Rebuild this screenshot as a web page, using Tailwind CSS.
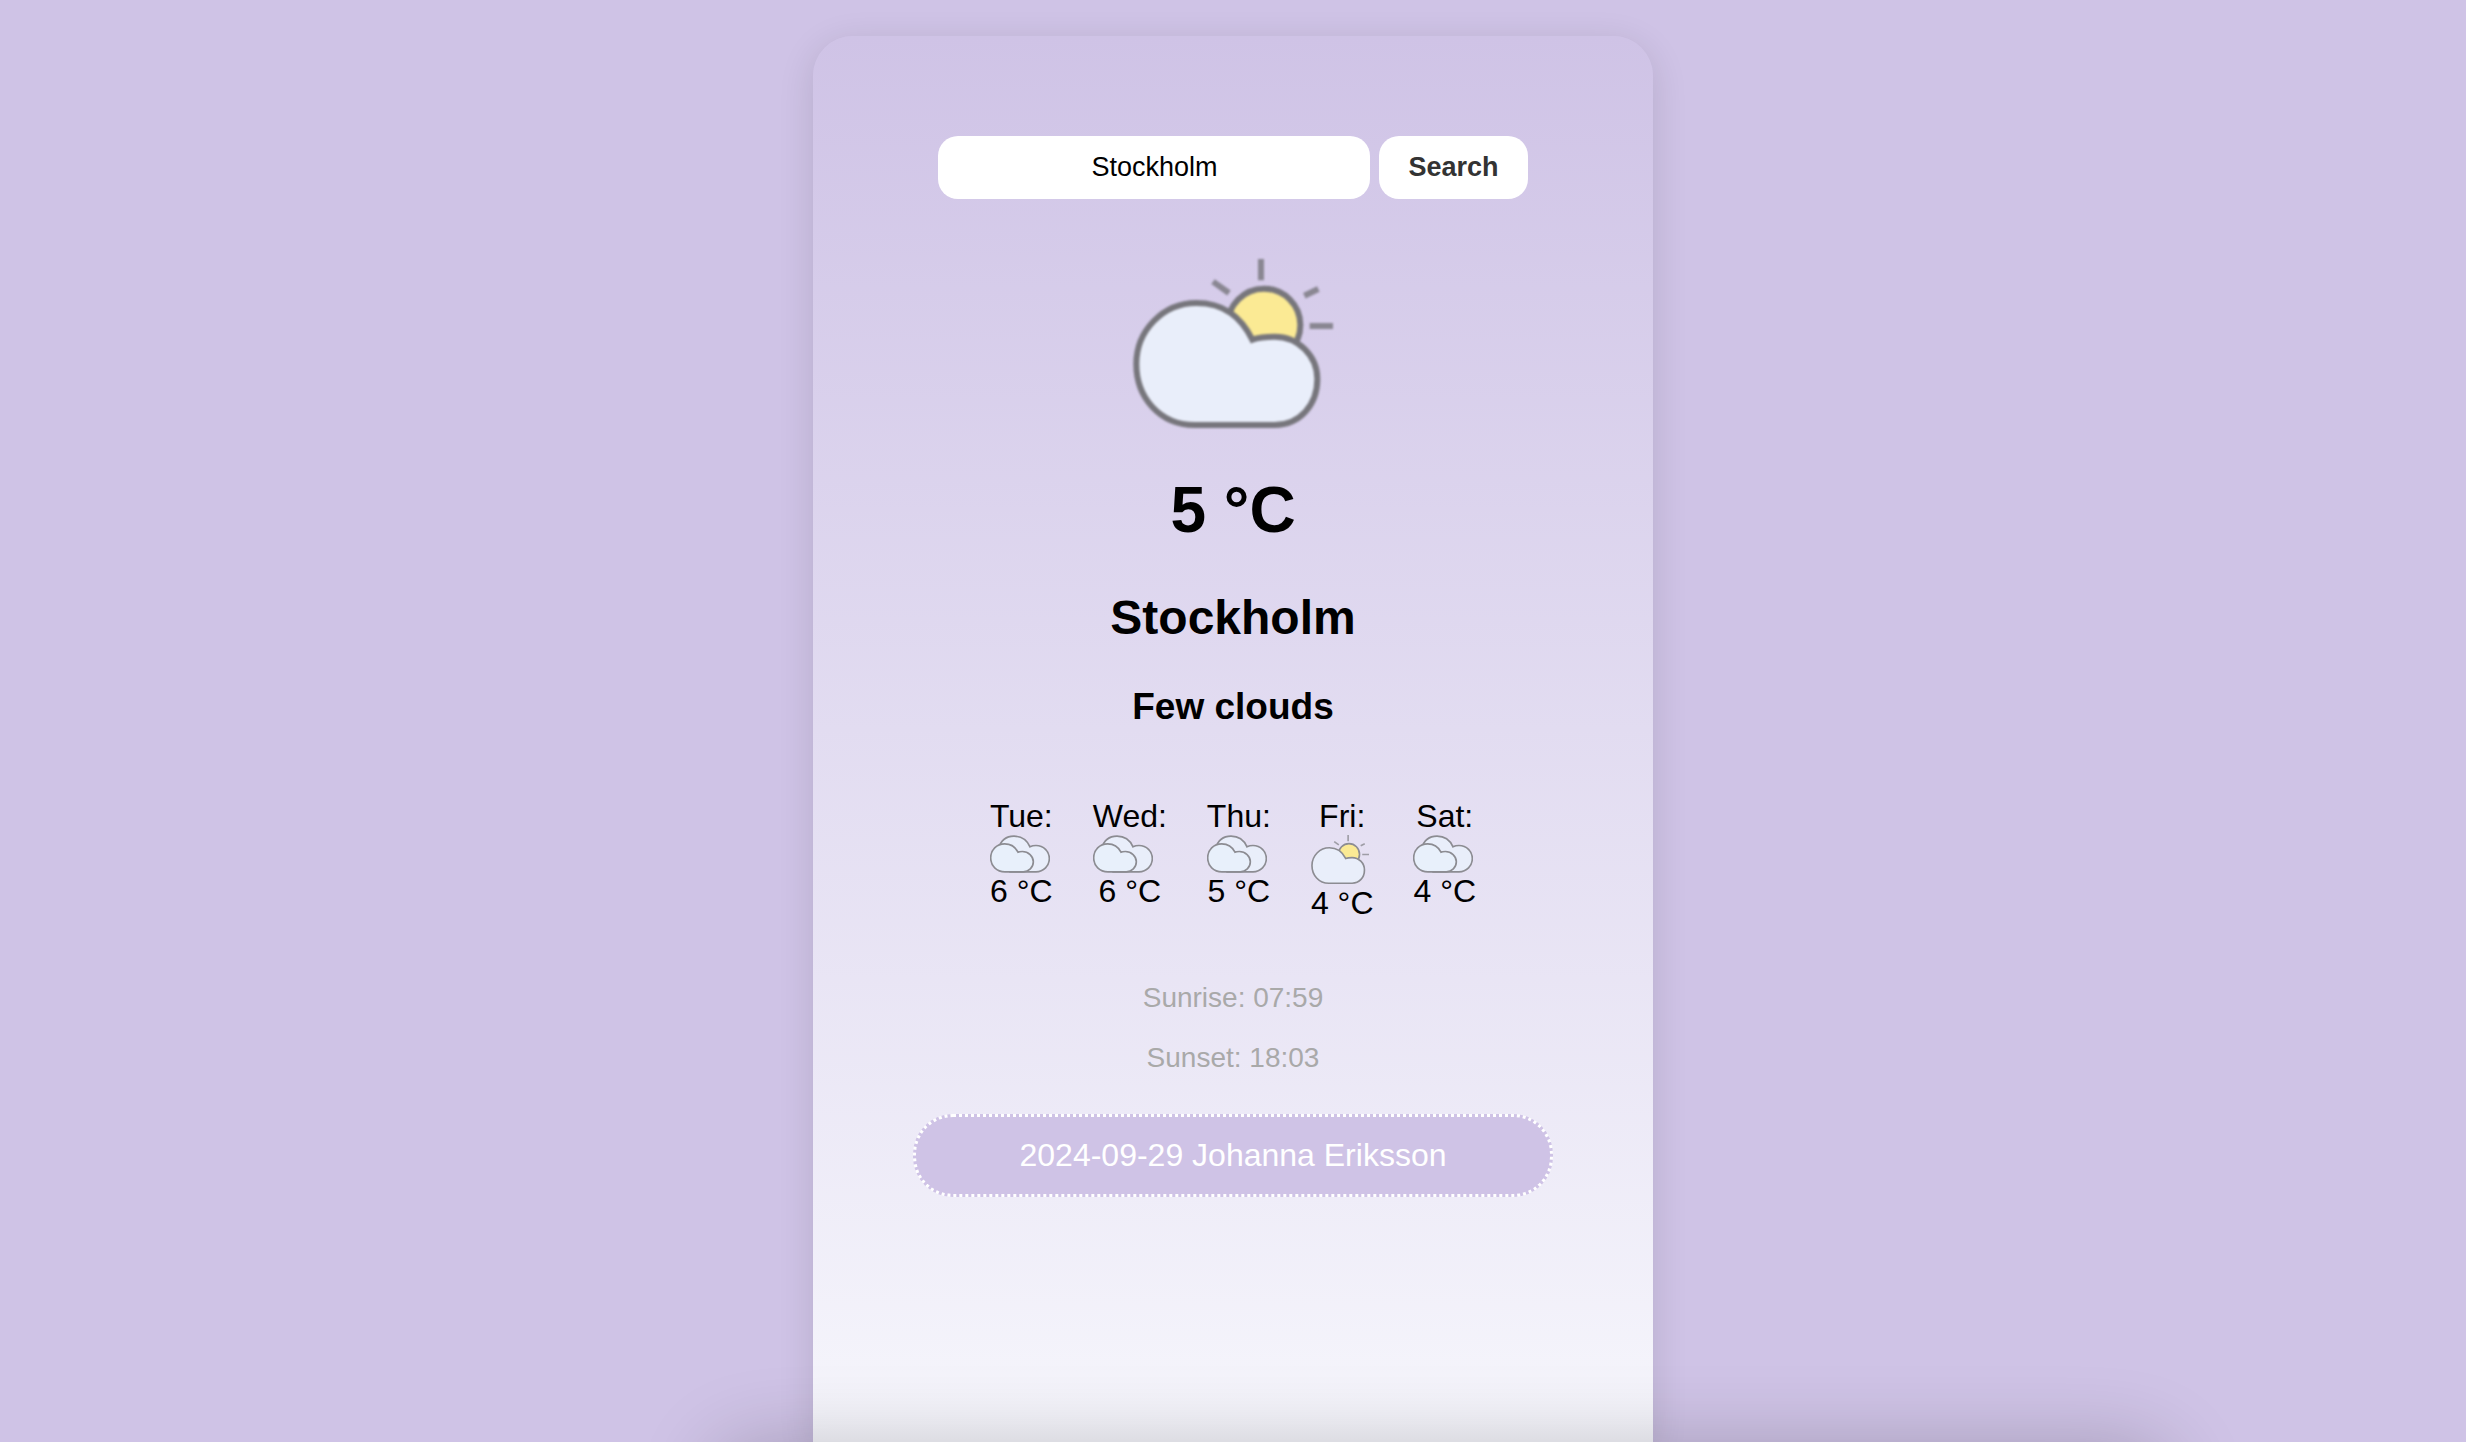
<!DOCTYPE html>
<html lang="en">
<head>
<meta charset="utf-8">
<meta name="viewport" content="width=device-width, initial-scale=1">
<title>Weather</title>
<script src="https://cdn.jsdelivr.net/npm/@tailwindcss/browser@4"></script>
</head>
<body class="min-h-screen overflow-hidden bg-[#cfc3e6] font-['Liberation_Sans',Arial,sans-serif] text-[32px] leading-[37px] text-black">

<!-- Shared weather symbols -->
<svg class="hidden" aria-hidden="true">
  <symbol id="few-clouds" viewBox="0 0 600 516" preserveAspectRatio="none">
    <path d="M384 0V64M530 201H600M514 110L556 90M240 68L288 102" fill="none" stroke-opacity=".8"/>
    <circle cx="393" cy="198" r="109" fill="#fbea94"/>
    <path fill="#e9eefa" d="M185 498C80 498 10 415 10 315C10 215 90 132 190 132C275 132 325 175 358 242C380 234 405 233 425 233C495 233 553 290 553 360C553 438 500 498 425 498Z"/>
  </symbol>
  <symbol id="broken-clouds" viewBox="0 0 180 113">
    <g stroke="#8c8c92" stroke-width="5">
      <path fill="#e9eefa" d="M26 40C32 18 48 3 72 3C95 3 112 17 120 35C126 32 132 31 138 31C161 31 178 49 178 70C178 92 161 110 138 110H60Z"/>
      <path fill="#e8f0fb" d="M45 110C20 110 2 92 2 68C2 44 20 26 44 26C62 26 76 35 84 51C88 49 92 49 97 49C115 49 130 63 130 80C130 97 116 110 100 110Z"/>
    </g>
  </symbol>
</svg>

<main class="mx-auto mt-9 min-h-[calc(100vh-36px)] w-full max-w-[840px] rounded-t-[40px] bg-linear-to-b from-[#cfc3e6] to-[#f6f6fc] px-[100px] pt-[100px] text-center shadow-[0_8px_36px_rgba(0,0,0,0.12)]">
  <form class="flex justify-center gap-[9px]" onsubmit="return false">
    <input type="text" aria-label="City" value="Stockholm" class="h-[63px] w-[432px] rounded-[20px] bg-white px-5 text-center text-[27px] outline-none">
    <button type="submit" class="h-[63px] rounded-[20px] bg-white px-[29px] text-[27px] font-bold text-[#333]">Search</button>
  </form>

  <section class="mt-[60px] flex flex-col items-center">
    <svg class="h-[172px] w-[200px] blur-[1px]" stroke="#77767c" stroke-width="18" role="img" aria-label="Few clouds"><use href="#few-clouds"/></svg>
    <h1 class="mt-[43px] text-[64px] leading-[73px] font-bold">5 °C</h1>
    <h2 class="mt-[43px] text-[48px] leading-[55px] font-bold">Stockholm</h2>
    <h3 class="mt-10 text-[37px] leading-[43px] font-bold">Few clouds</h3>
  </section>

  <ul class="mt-[70px] flex justify-center gap-10">
    <li>
      <p>Tue:</p>
      <svg class="h-[38px] w-[60px]" aria-hidden="true"><use href="#broken-clouds"/></svg>
      <p>6 °C</p>
    </li>
    <li>
      <p>Wed:</p>
      <svg class="h-[38px] w-[60px]" aria-hidden="true"><use href="#broken-clouds"/></svg>
      <p>6 °C</p>
    </li>
    <li>
      <p>Thu:</p>
      <svg class="h-[38px] w-[60px]" aria-hidden="true"><use href="#broken-clouds"/></svg>
      <p>5 °C</p>
    </li>
    <li>
      <p>Fri:</p>
      <svg class="h-[50px] w-[58px]" stroke="#8c8c92" stroke-width="17" aria-hidden="true"><use href="#few-clouds"/></svg>
      <p>4 °C</p>
    </li>
    <li>
      <p>Sat:</p>
      <svg class="h-[38px] w-[60px]" aria-hidden="true"><use href="#broken-clouds"/></svg>
      <p>4 °C</p>
    </li>
  </ul>

  <div class="mt-[60px] flex flex-col gap-7 text-[28px] leading-8 text-[#a9a9a9]">
    <p>Sunrise: 07:59</p>
    <p>Sunset: 18:03</p>
  </div>

  <footer class="mt-10 rounded-[40px] border-3 border-dotted border-white bg-[#cfc3e6] py-5 text-white">2024-09-29 Johanna Eriksson</footer>
</main>

<!-- Soft shade rising from the bottom edge -->
<div class="pointer-events-none fixed top-full right-[12%] left-[29%] h-60 rounded-[40px] shadow-[0_4px_80px_rgba(0,0,0,0.22)]"></div>
</body>
</html>
